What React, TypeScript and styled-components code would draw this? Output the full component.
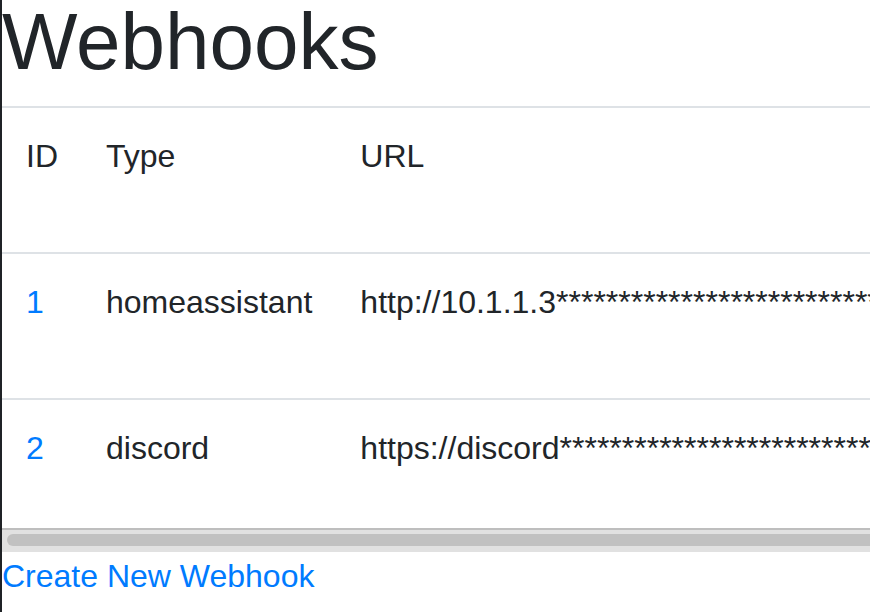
import React from "react";
import styled, { createGlobalStyle } from "styled-components";

const GlobalStyle = createGlobalStyle`
  html, body {
    margin: 0;
    padding: 0;
    background: #fff;
  }
  body {
    font-family: "Liberation Sans", Arial, sans-serif;
    font-size: 32px;
    line-height: 1.5;
    color: #212529;
    overflow: hidden;
  }
`;

const Page = styled.div`
  border-left: 2px solid #1f2226;
  min-height: 612px;
  box-sizing: border-box;
`;

const Title = styled.h1`
  margin: 0 0 22px;
  font-size: 80px;
  font-weight: 400;
  line-height: 84px;
  color: #212529;
`;

const TableScroll = styled.div`
  width: 100%;
  overflow: hidden;
`;

const Table = styled.table`
  border-collapse: separate;
  border-spacing: 0;
  margin: 0;
  white-space: nowrap;
`;

const Row = styled.tr<{ $bottom: number }>`
  & > th,
  & > td {
    padding: 24px 24px ${(p) => p.$bottom}px;
    border-top: 2px solid #dee2e6;
    vertical-align: top;
    text-align: left;
    font-weight: 400;
    line-height: 48px;
  }
`;

// horizontal scrollbar under the table, thumb at scroll position 0
const ScrollTrack = styled.div`
  display: flex;
  box-sizing: border-box;
  height: 24px;
  padding: 4px 0 6px 5px;
  border-top: 2px solid #bebebe;
  background: #e1e1e1;
  overflow: hidden;
`;

const ScrollThumb = styled.div`
  flex: 1;
  height: 12px;
  margin-right: -24px;
  border-radius: 6px;
  background: #c1c1c1;
`;

const IdLink = styled.a`
  color: #007bff;
  text-decoration: none;
`;

const CreateLink = styled.a`
  display: block;
  color: #007bff;
  text-decoration: none;
  line-height: 48px;
`;

const mask = "*".repeat(40);

const webhooks = [
  { id: 1, type: "homeassistant", url: "http://10.1.1.3", bottom: 72 },
  { id: 2, type: "discord", url: "https://discord", bottom: 56 },
];

export default function App() {
  return (
    <>
      <GlobalStyle />
      <Page>
        <Title>Webhooks</Title>
        <TableScroll>
          <Table>
            <thead>
              <Row $bottom={72}>
                <th>ID</th>
                <th>Type</th>
                <th>URL</th>
              </Row>
            </thead>
            <tbody>
              {webhooks.map((w) => (
                <Row key={w.id} $bottom={w.bottom}>
                  <td>
                    <IdLink href="#">{w.id}</IdLink>
                  </td>
                  <td>{w.type}</td>
                  <td>
                    {w.url}
                    {mask}
                  </td>
                </Row>
              ))}
            </tbody>
          </Table>
        </TableScroll>
        <ScrollTrack>
          <ScrollThumb />
        </ScrollTrack>
        <CreateLink href="#">Create New Webhook</CreateLink>
      </Page>
    </>
  );
}
